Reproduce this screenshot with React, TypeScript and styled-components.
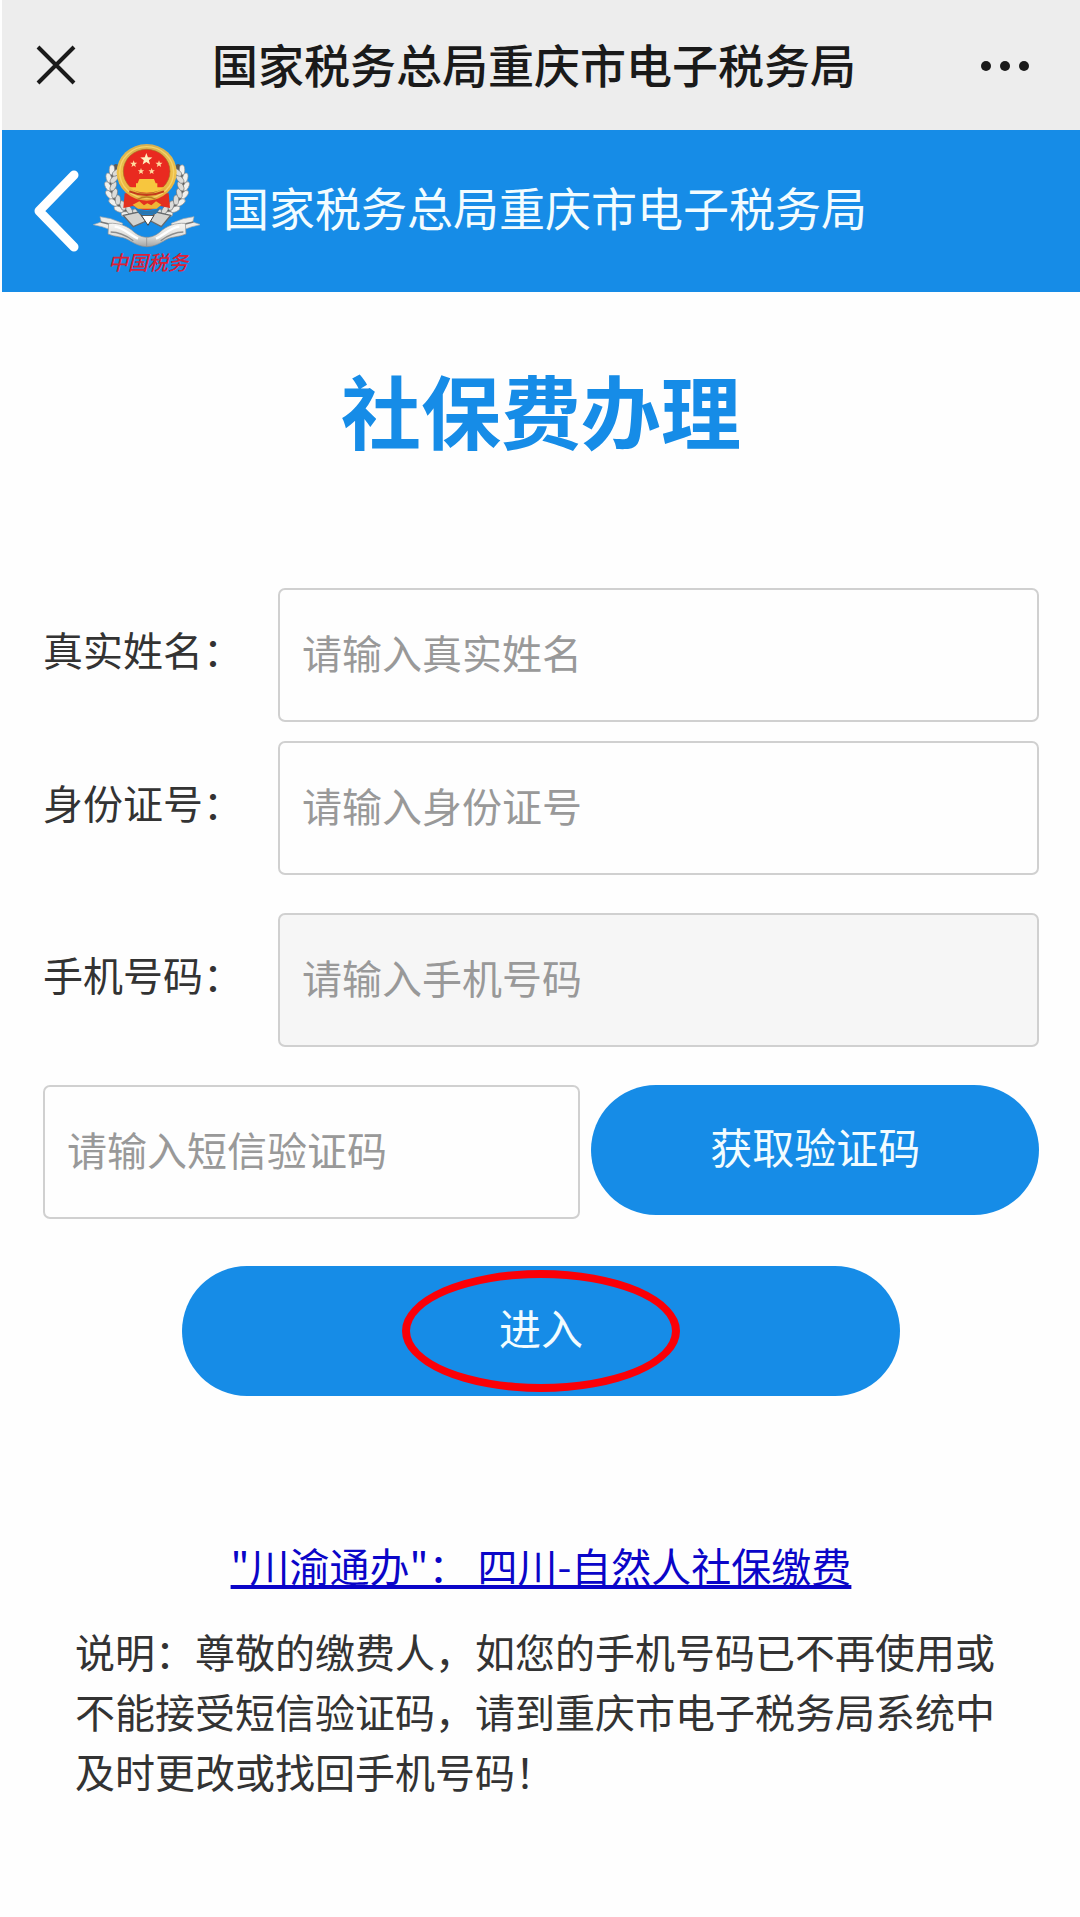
import React from "react";
import styled, { createGlobalStyle } from "styled-components";

const blue = "#168ce7";

const GlobalStyle = createGlobalStyle`
  *, *::before, *::after { box-sizing: border-box; }
  body {
    margin: 0;
    background: #fefefe;
    color: #333;
    font-family: "Noto Sans CJK SC", "Noto Sans", sans-serif;
    font-size: 40px;
    line-height: 60px;
  }
  button, input { font: inherit; }
`;

const Page = styled.div`
  border-left: 2px solid #fefefe;
`;

const IconButton = styled.button`
  display: flex;
  flex: none;
  padding: 0;
  border: 0;
  background: none;
  color: inherit;
  cursor: pointer;
`;

const TopBar = styled.div`
  display: grid;
  grid-template-columns: 1fr auto 1fr;
  align-items: center;
  height: 130px;
  padding: 0 48px 0 34px;
  background: #ededed;
  color: #1a1a1a;
  & > :first-child { justify-self: start; }
  & > :last-child { justify-self: end; }
`;

const TopTitle = styled.div`
  padding-bottom: 4px;
  font-size: 46px;
  font-weight: 500;
`;

const Header = styled.header`
  display: flex;
  align-items: center;
  height: 162px;
  padding-left: 30px;
  background: ${blue};
  color: #f2fcff;
`;

const Logo = styled.svg`
  flex: none;
  margin: 0 23px 0 10px;
`;

const HeaderTitle = styled.div`
  padding-bottom: 10px;
  font-size: 46px;
`;

const Heading = styled.h1`
  margin: 56px 0 120px;
  color: ${blue};
  font-size: 80px;
  font-weight: 700;
  line-height: 120px;
  text-align: center;
`;

const Form = styled.form`
  display: flex;
  flex-direction: column;
  gap: 38px;
  padding: 0 41px;
`;

const FieldGroup = styled.div`
  display: grid;
  gap: 19px;
`;

const Field = styled.div`
  display: grid;
  grid-template-columns: 235px 1fr;
  align-items: center;
`;

const Label = styled.label`
  padding-bottom: 12px;
`;

const TextBox = styled.input<{ $shaded?: boolean }>`
  width: 100%;
  min-width: 0;
  height: 134px;
  padding: 0 22px 6px;
  border: 2px solid #d0d0d0;
  border-radius: 7px;
  outline: 0;
  background: ${(p) => (p.$shaded ? "#f6f6f6" : "#fefefe")};
  color: #333;
  &::placeholder { color: #999; opacity: 1; }
`;

const CodeRow = styled.div`
  display: grid;
  grid-template-columns: 6fr 5fr;
  column-gap: 11px;
`;

const PillButton = styled.button`
  height: 130px;
  padding: 0 0 8px;
  border: 0;
  border-radius: 65px;
  background: ${blue};
  color: #f2fcff;
  font-size: 42px;
  cursor: pointer;
`;

const SubmitRow = styled.div`
  position: relative;
  display: grid;
  width: 72%;
  margin: 9px auto 0;
`;

const Ring = styled.span`
  position: absolute;
  inset: 4px 0;
  width: 278px;
  margin: 0 auto;
  border: 8px solid #fb0007;
  border-radius: 50%;
  pointer-events: none;
`;

const LinkRow = styled.div`
  margin-top: 139px;
  text-align: center;
`;

const Link = styled.a`
  color: #0a05c8;
  text-decoration: underline;
  text-decoration-thickness: 4px;
  text-decoration-skip-ink: none;
  text-underline-offset: 3px;
`;

const Note = styled.p`
  margin: 26px 0 0;
  padding: 0 73px 80px;
`;

const star = (cx: number, cy: number, r: number) =>
  Array.from({ length: 10 }, (_, i) => {
    const a = (Math.PI / 5) * i - Math.PI / 2;
    const d = i % 2 ? r * 0.42 : r;
    return `${cx + d * Math.cos(a)},${cy + d * Math.sin(a)}`;
  }).join(" ");

const grains = Array.from({ length: 8 }, (_, i) => {
  const turn = 110 + i * 14;
  const a = (turn * Math.PI) / 180;
  return { x: 200 + 108 * Math.cos(a), y: 165 + 96 * Math.sin(a), turn };
});

const Wheat = () => (
  <>
    {grains.map((g) => (
      <g key={g.turn} transform={`translate(${g.x} ${g.y}) rotate(${g.turn})`}>
        <ellipse cx="2" cy="6" rx="9" ry="12" fill="#5b5a58" />
        <ellipse cx="9" cy="0" rx="8" ry="15" transform="rotate(-26)" fill="#f1f1ee" stroke="#8d8f90" strokeWidth="2" />
        <ellipse cx="-9" cy="0" rx="8" ry="15" transform="rotate(26)" fill="#dcdcd9" stroke="#77797a" strokeWidth="2" />
      </g>
    ))}
  </>
);

const Ribbon = () => (
  <>
    <path d="M40 284 L64 276 L60 260 L92 266 L128 280 L118 312 L88 298 L66 290 Z" fill="#ececea" stroke="#a9abac" strokeWidth="2" />
    <path d="M62 276 L96 284 L116 298" fill="none" stroke="#77797a" strokeWidth="5" />
    <path d="M86 280 C118 278 142 288 162 306 C178 319 190 322 202 322 L202 350 C180 350 164 341 144 329 C124 318 106 322 84 312 Z" fill="url(#silver)" stroke="#8b8d8e" strokeWidth="2" />
    <path d="M104 290 C130 292 148 314 174 326" fill="none" stroke="#fff" strokeWidth="7" />
    <path d="M92 306 C116 306 138 316 160 332" fill="none" stroke="#8c8d8d" strokeWidth="4" />
  </>
);

const Emblem = () => (
  <Logo width="108" height="138" viewBox="36 36 324 414" role="img" aria-label="中国税务">
    <defs>
      <linearGradient id="silver" x1="0" y1="0" x2="0" y2="1">
        <stop offset="0" stopColor="#f6f6f4" />
        <stop offset="0.55" stopColor="#dededb" />
        <stop offset="1" stopColor="#a3a5a6" />
      </linearGradient>
      <linearGradient id="gold" x1="0" y1="0" x2="0" y2="1">
        <stop offset="0" stopColor="#d5b052" />
        <stop offset="0.5" stopColor="#efc24a" />
        <stop offset="1" stopColor="#e4ab3a" />
      </linearGradient>
    </defs>
    <Wheat />
    <g transform="translate(402 0) scale(-1 1)"><Wheat /></g>
    <path d="M130 256 L176 246 L202 278 L228 246 L272 256 L244 290 L206 270 L160 290 Z" fill="#d3d3d0" stroke="#666a6d" strokeWidth="4" />
    <path d="M184 256 L204 286 L222 256 Z" fill="#fff" stroke="#444" strokeWidth="3" />
    <path d="M134 190 H266 L270 234 L240 228 Q200 252 160 228 L130 234 Z" fill="#e3301f" />
    <path d="M164 234 Q200 252 242 234 L228 252 H178 Z" fill="#2b76ae" />
    <path d="M158 224 L178 214 L192 226 L202 220 L214 226 L228 214 L244 224 L230 236 H174 Z" fill="#f0b536" />
    <ellipse cx="200" cy="127" rx="90" ry="85" fill="url(#gold)" />
    <ellipse cx="200" cy="127" rx="81" ry="77" fill="none" stroke="#f6d36a" strokeWidth="4" />
    <ellipse cx="200" cy="124" rx="70" ry="66" fill="#e92a20" stroke="#a76a22" strokeWidth="2" />
    <polygon points={star(199, 88, 19)} fill="#fff0c0" />
    <polygon points={star(161, 102, 11)} fill="#ffdca0" />
    <polygon points={star(237, 102, 11)} fill="#ffdca0" />
    <polygon points={star(183, 124, 10)} fill="#ffdca0" />
    <polygon points={star(215, 124, 10)} fill="#ffdca0" />
    <path d="M178 147 H222 L227 160 H232 V172 H252 Q236 188 200 188 Q164 188 148 172 H168 V160 H173 Z" fill="#f7c63e" />
    <path d="M148 184 Q200 206 252 184" fill="none" stroke="#c33b1c" strokeWidth="6" />
    <path d="M172 208 Q200 194 228 208" fill="none" stroke="#b98224" strokeWidth="4" />
    <Ribbon />
    <g transform="translate(402 0) scale(-1 1)"><Ribbon /></g>
    <text x="204" y="420" textAnchor="middle" fontSize="60" fontWeight="500" fontStyle="italic" fill="#dc2036">中国税务</text>
  </Logo>
);

type FieldProps = { id: string; label: string; shaded?: boolean; type?: string };

const LabeledField = ({ id, label, shaded, type = "text" }: FieldProps) => (
  <Field>
    <Label htmlFor={id}>{label}：</Label>
    <TextBox id={id} type={type} placeholder={`请输入${label}`} $shaded={shaded} />
  </Field>
);

export default function App() {
  return (
    <>
      <GlobalStyle />
      <Page>
        <TopBar>
          <IconButton type="button" aria-label="关闭">
            <svg width="40" height="40" viewBox="0 0 40 40" fill="none" stroke="currentColor" strokeWidth="4">
              <path d="M2 2 L38 38 M38 2 L2 38" />
            </svg>
          </IconButton>
          <TopTitle>国家税务总局重庆市电子税务局</TopTitle>
          <IconButton type="button" aria-label="更多">
            <svg width="52" height="40" viewBox="0 0 52 40" fill="currentColor">
              <circle cx="6" cy="21" r="5" />
              <circle cx="25" cy="21" r="5" />
              <circle cx="44" cy="21" r="5" />
            </svg>
          </IconButton>
        </TopBar>
        <Header>
          <IconButton type="button" aria-label="返回">
            <svg width="50" height="86" viewBox="0 0 50 86" fill="none" stroke="#fff" strokeWidth="9" strokeLinecap="round" strokeLinejoin="round">
              <path d="M42 7 L7 43 L42 79" />
            </svg>
          </IconButton>
          <Emblem />
          <HeaderTitle>国家税务总局重庆市电子税务局</HeaderTitle>
        </Header>
        <main>
          <Heading>社保费办理</Heading>
          <Form onSubmit={(e) => e.preventDefault()}>
            <FieldGroup>
              <LabeledField id="name" label="真实姓名" />
              <LabeledField id="idno" label="身份证号" />
            </FieldGroup>
            <LabeledField id="phone" label="手机号码" type="tel" shaded />
            <CodeRow>
              <TextBox type="text" aria-label="短信验证码" placeholder="请输入短信验证码" />
              <PillButton type="button">获取验证码</PillButton>
            </CodeRow>
            <SubmitRow>
              <PillButton type="submit">进入</PillButton>
              <Ring />
            </SubmitRow>
          </Form>
          <LinkRow>
            <Link href="#sichuan">"川渝通办"： 四川-自然人社保缴费</Link>
          </LinkRow>
          <Note>
            说明：尊敬的缴费人，如您的手机号码已不再使用或不能接受短信验证码，请到重庆市电子税务局系统中及时更改或找回手机号码！
          </Note>
        </main>
      </Page>
    </>
  );
}
